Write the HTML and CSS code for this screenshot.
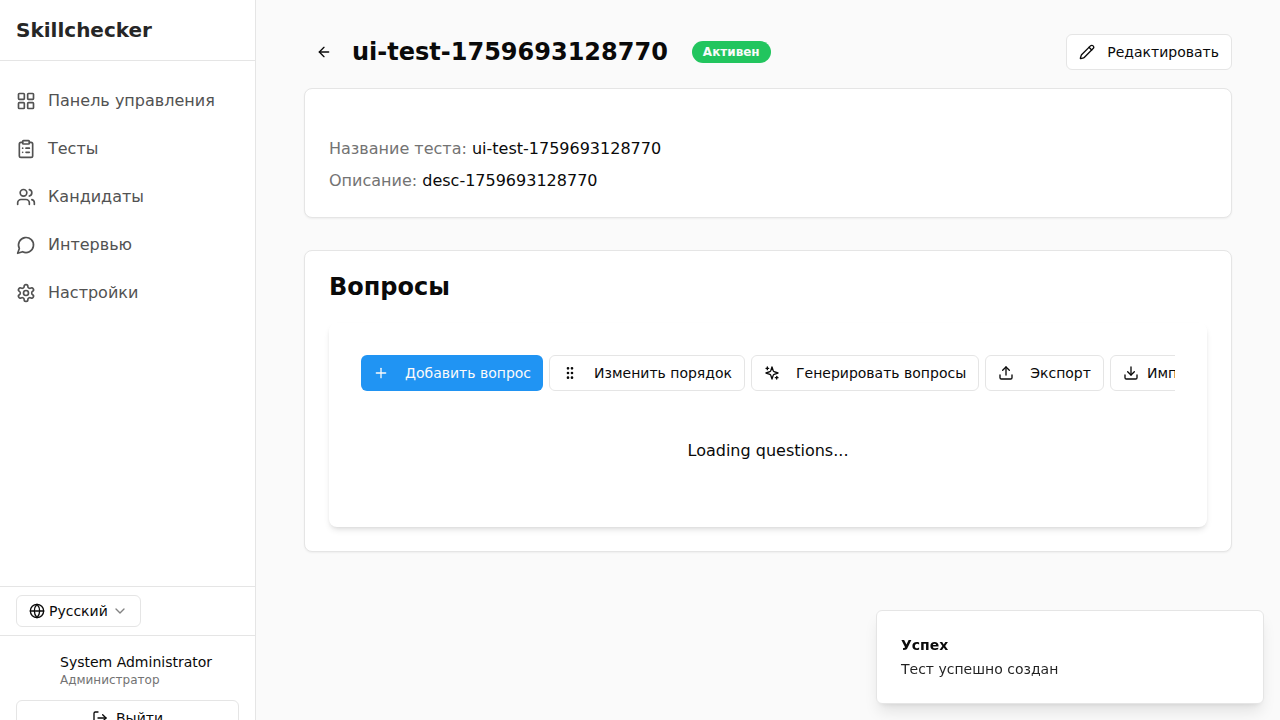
FILE: index.html
```html
<!DOCTYPE html>
<html lang="ru">
<head>
  <meta charset="utf-8">
  <meta name="viewport" content="width=device-width, initial-scale=1">
  <title>Skillchecker</title>
  <link rel="stylesheet" href="styles.css">
</head>
<body>
  <div class="layout">
    <aside class="sidebar">
      <div class="sidebar-inner">
        <div class="brand">Skillchecker</div>
        <nav class="nav">
          <a class="nav-link" href="#"><svg class="icon icon-md" viewBox="0 0 24 24"><rect width="7" height="7" x="3" y="3" rx="1"/><rect width="7" height="7" x="14" y="3" rx="1"/><rect width="7" height="7" x="14" y="14" rx="1"/><rect width="7" height="7" x="3" y="14" rx="1"/></svg>Панель управления</a>
          <a class="nav-link" href="#"><svg class="icon icon-md" viewBox="0 0 24 24"><rect width="8" height="4" x="8" y="2" rx="1" ry="1"/><path d="M16 4h2a2 2 0 0 1 2 2v14a2 2 0 0 1-2 2H6a2 2 0 0 1-2-2V6a2 2 0 0 1 2-2h2"/><path d="M12 11h4"/><path d="M12 16h4"/><path d="M8 11h.01"/><path d="M8 16h.01"/></svg>Тесты</a>
          <a class="nav-link" href="#"><svg class="icon icon-md" viewBox="0 0 24 24"><path d="M16 21v-2a4 4 0 0 0-4-4H6a4 4 0 0 0-4 4v2"/><circle cx="9" cy="7" r="4"/><path d="M22 21v-2a4 4 0 0 0-3-3.87"/><path d="M16 3.13a4 4 0 0 1 0 7.75"/></svg>Кандидаты</a>
          <a class="nav-link" href="#"><svg class="icon icon-md" viewBox="0 0 24 24"><path d="M7.9 20A9 9 0 1 0 4 16.1L2 22Z"/></svg>Интервью</a>
          <a class="nav-link" href="#"><svg class="icon icon-md" viewBox="0 0 24 24"><path d="M12.22 2h-.44a2 2 0 0 0-2 2v.18a2 2 0 0 1-1 1.73l-.43.25a2 2 0 0 1-2 0l-.15-.08a2 2 0 0 0-2.73.73l-.22.38a2 2 0 0 0 .73 2.73l.15.1a2 2 0 0 1 1 1.72v.51a2 2 0 0 1-1 1.74l-.15.09a2 2 0 0 0-.73 2.73l.22.38a2 2 0 0 0 2.73.73l.15-.08a2 2 0 0 1 2 0l.43.25a2 2 0 0 1 1 1.73V20a2 2 0 0 0 2 2h.44a2 2 0 0 0 2-2v-.18a2 2 0 0 1 1-1.73l.43-.25a2 2 0 0 1 2 0l.15.08a2 2 0 0 0 2.73-.73l.22-.39a2 2 0 0 0-.73-2.73l-.15-.08a2 2 0 0 1-1-1.74v-.5a2 2 0 0 1 1-1.74l.15-.09a2 2 0 0 0 .73-2.73l-.22-.38a2 2 0 0 0-2.73-.73l-.15.08a2 2 0 0 1-2 0l-.43-.25a2 2 0 0 1-1-1.73V4a2 2 0 0 0-2-2z"/><circle cx="12" cy="12" r="3"/></svg>Настройки</a>
        </nav>
        <div class="language">
          <label class="language-box">
            <svg class="icon" viewBox="0 0 24 24"><circle cx="12" cy="12" r="10"/><path d="M12 2a14.5 14.5 0 0 0 0 20 14.5 14.5 0 0 0 0-20"/><path d="M2 12h20"/></svg>
            <select class="language-select" aria-label="Язык">
              <option>Русский</option>
            </select>
            <svg class="icon icon-faded" viewBox="0 0 24 24"><path d="m6 9 6 6 6-6"/></svg>
          </label>
        </div>
        <div class="account">
          <div class="user">
            <div class="user-avatar"></div>
            <div class="user-text">
              <div class="user-name">System Administrator</div>
              <div class="user-role">Администратор</div>
            </div>
          </div>
          <button class="button button-block" type="button"><svg class="icon" viewBox="0 0 24 24"><path d="M9 21H5a2 2 0 0 1-2-2V5a2 2 0 0 1 2-2h4"/><path d="m16 17 5-5-5-5"/><path d="M21 12H9"/></svg>Выйти</button>
        </div>
      </div>
    </aside>

    <main class="main">
      <header class="page-header">
        <button class="back" type="button" aria-label="Назад"><svg class="icon" viewBox="0 0 24 24"><path d="m12 19-7-7 7-7"/><path d="M19 12H5"/></svg></button>
        <h1 class="page-title">ui-test-1759693128770</h1>
        <span class="badge">Активен</span>
        <button class="button button-edit" type="button"><svg class="icon" viewBox="0 0 24 24"><path d="M21.174 6.812a1 1 0 0 0-3.986-3.987L3.842 16.174a2 2 0 0 0-.5.83l-1.321 4.352a.5.5 0 0 0 .623.622l4.353-1.32a2 2 0 0 0 .83-.497z"/><path d="m15 5 4 4"/></svg>Редактировать</button>
      </header>

      <section class="card details">
        <div><span class="muted">Название теста:</span> ui-test-1759693128770</div>
        <div><span class="muted">Описание:</span> desc-1759693128770</div>
      </section>

      <section class="card questions">
        <h2 class="card-title">Вопросы</h2>
        <div class="panel">
          <div class="toolbar">
            <button class="button button-wide button-primary" type="button"><svg class="icon" viewBox="0 0 24 24"><path d="M5 12h14"/><path d="M12 5v14"/></svg>Добавить вопрос</button>
            <button class="button button-wide" type="button"><svg class="icon" viewBox="0 0 24 24"><circle cx="9" cy="12" r="1"/><circle cx="9" cy="5" r="1"/><circle cx="9" cy="19" r="1"/><circle cx="15" cy="12" r="1"/><circle cx="15" cy="5" r="1"/><circle cx="15" cy="19" r="1"/></svg>Изменить порядок</button>
            <button class="button button-wide" type="button"><svg class="icon" viewBox="0 0 24 24"><path d="m12 3-1.912 5.813a2 2 0 0 1-1.275 1.275L3 12l5.813 1.912a2 2 0 0 1 1.275 1.275L12 21l1.912-5.813a2 2 0 0 1 1.275-1.275L21 12l-5.813-1.912a2 2 0 0 1-1.275-1.275L12 3Z"/><path d="M5 3v4"/><path d="M19 17v4"/><path d="M3 5h4"/><path d="M17 19h4"/></svg>Генерировать вопросы</button>
            <button class="button button-wide" type="button"><svg class="icon" viewBox="0 0 24 24"><path d="M21 15v4a2 2 0 0 1-2 2H5a2 2 0 0 1-2-2v-4"/><path d="m17 8-5-5-5 5"/><path d="M12 3v12"/></svg>Экспорт</button>
            <button class="button" type="button"><svg class="icon" viewBox="0 0 24 24"><path d="M21 15v4a2 2 0 0 1-2 2H5a2 2 0 0 1-2-2v-4"/><path d="m7 10 5 5 5-5"/><path d="M12 15V3"/></svg>Импорт</button>
          </div>
          <p class="loading">Loading questions...</p>
        </div>
      </section>
    </main>
  </div>

  <div class="toast" role="status">
    <div class="toast-title">Успех</div>
    <div class="toast-text">Тест успешно создан</div>
  </div>
</body>
</html>
```
FILE: styles.css
```css
*,
*::before,
*::after {
  box-sizing: border-box;
}

body {
  margin: 0;
  background: #fafafa;
  color: #0a0a0a;
  font-family: "DejaVu Sans", sans-serif;
  font-size: 16px;
  line-height: 24px;
}

button,
select {
  font: inherit;
  color: inherit;
}

h1,
h2,
p {
  margin: 0;
}

.layout {
  display: flex;
  height: 100vh;
  overflow: hidden;
}

.icon {
  flex: none;
  width: 16px;
  height: 16px;
  fill: none;
  stroke: currentColor;
  stroke-width: 2;
  stroke-linecap: round;
  stroke-linejoin: round;
}

.icon-md {
  width: 20px;
  height: 20px;
}

.icon-faded {
  opacity: 0.5;
}

.muted {
  color: #737373;
}

/* Sidebar */
.sidebar {
  flex: none;
  width: 256px;
  overflow: hidden;
  background: #fff;
  border-right: 1px solid #e5e5e5;
}

.sidebar-inner {
  display: flex;
  flex-direction: column;
  min-height: calc(100% + 32px);
}

.brand {
  padding: 16px;
  border-bottom: 1px solid #e5e5e5;
  color: #262626;
  font-size: 20px;
  font-weight: 700;
  line-height: 28px;
}

.nav {
  flex: 1;
  padding: 16px 0;
}

.nav-link {
  display: flex;
  align-items: center;
  gap: 12px;
  padding: 12px 16px;
  color: #525252;
  text-decoration: none;
}

.language {
  display: flex;
  padding: 8px 16px;
  border-top: 1px solid #e5e5e5;
}

.language-box {
  display: flex;
  align-items: center;
  gap: 4px;
  height: 32px;
  padding: 0 12px;
  border: 1px solid #e5e5e5;
  border-radius: 6px;
  font-size: 14px;
  line-height: 20px;
}

.language-select {
  appearance: none;
  padding: 0;
  border: 0;
  background: none;
}

.account {
  display: flex;
  flex-direction: column;
  gap: 12px;
  padding: 16px;
  border-top: 1px solid #e5e5e5;
}

.user {
  display: flex;
  align-items: center;
  gap: 12px;
}

.user-avatar {
  width: 32px;
  height: 32px;
  border-radius: 50%;
}

.user-name {
  font-size: 14px;
  line-height: 20px;
}

.user-role {
  color: #737373;
  font-size: 12px;
  line-height: 16px;
}

/* Buttons */
.button {
  display: inline-flex;
  flex: none;
  align-items: center;
  justify-content: center;
  gap: 8px;
  height: 36px;
  padding: 0 12px;
  background: #fff;
  border: 1px solid #e5e5e5;
  border-radius: 6px;
  font-size: 14px;
  line-height: 20px;
  white-space: nowrap;
}

.button-block {
  width: 100%;
}

.button-edit {
  gap: 12px;
  margin-left: auto;
}

.button-wide {
  gap: 16px;
}

.button-primary {
  border: 0;
  background: #2094f3;
  color: #fafafa;
}

/* Content */
.main {
  flex: 1;
  min-width: 0;
  padding: 32px 48px;
  overflow: hidden;
}

.page-header {
  display: flex;
  align-items: center;
  margin-bottom: 16px;
}

.back {
  display: flex;
  align-items: center;
  justify-content: center;
  width: 40px;
  height: 40px;
  margin-right: 8px;
  padding: 0;
  border: 0;
  background: none;
}

.page-title {
  font-size: 24px;
  font-weight: 700;
  line-height: 32px;
}

.badge {
  margin-left: 24px;
  padding: 3px 11px;
  border-radius: 11px;
  background: #22c55e;
  color: #fafafa;
  font-size: 12px;
  font-weight: 700;
  line-height: 16px;
}

.card {
  background: #fff;
  border: 1px solid #e5e5e5;
  border-radius: 8px;
  box-shadow: 0 1px 2px rgba(0, 0, 0, 0.05);
}

.details {
  display: flex;
  flex-direction: column;
  gap: 8px;
  margin-bottom: 32px;
  padding: 48px 24px 24px;
}

.questions {
  padding: 24px;
}

.card-title {
  margin-bottom: 24px;
  font-size: 24px;
  font-weight: 700;
  line-height: 24px;
}

.panel {
  padding: 32px;
  border-radius: 8px;
  box-shadow: 0 4px 6px -1px rgba(0, 0, 0, 0.1), 0 2px 4px -2px rgba(0, 0, 0, 0.1);
}

.toolbar {
  display: flex;
  gap: 6px;
  overflow: hidden;
}

.loading {
  padding: 48px 0 32px;
  text-align: center;
}

.toast {
  position: fixed;
  right: 16px;
  bottom: 16px;
  width: 388px;
  max-width: calc(100% - 32px);
  padding: 24px;
  background: #fff;
  border: 1px solid #e5e5e5;
  border-radius: 6px;
  box-shadow: 0 10px 15px -3px rgba(0, 0, 0, 0.1), 0 4px 6px -4px rgba(0, 0, 0, 0.1);
  font-size: 14px;
  line-height: 20px;
}

.toast-title {
  margin-bottom: 4px;
  font-weight: 700;
}

.toast-text {
  opacity: 0.9;
}
```
